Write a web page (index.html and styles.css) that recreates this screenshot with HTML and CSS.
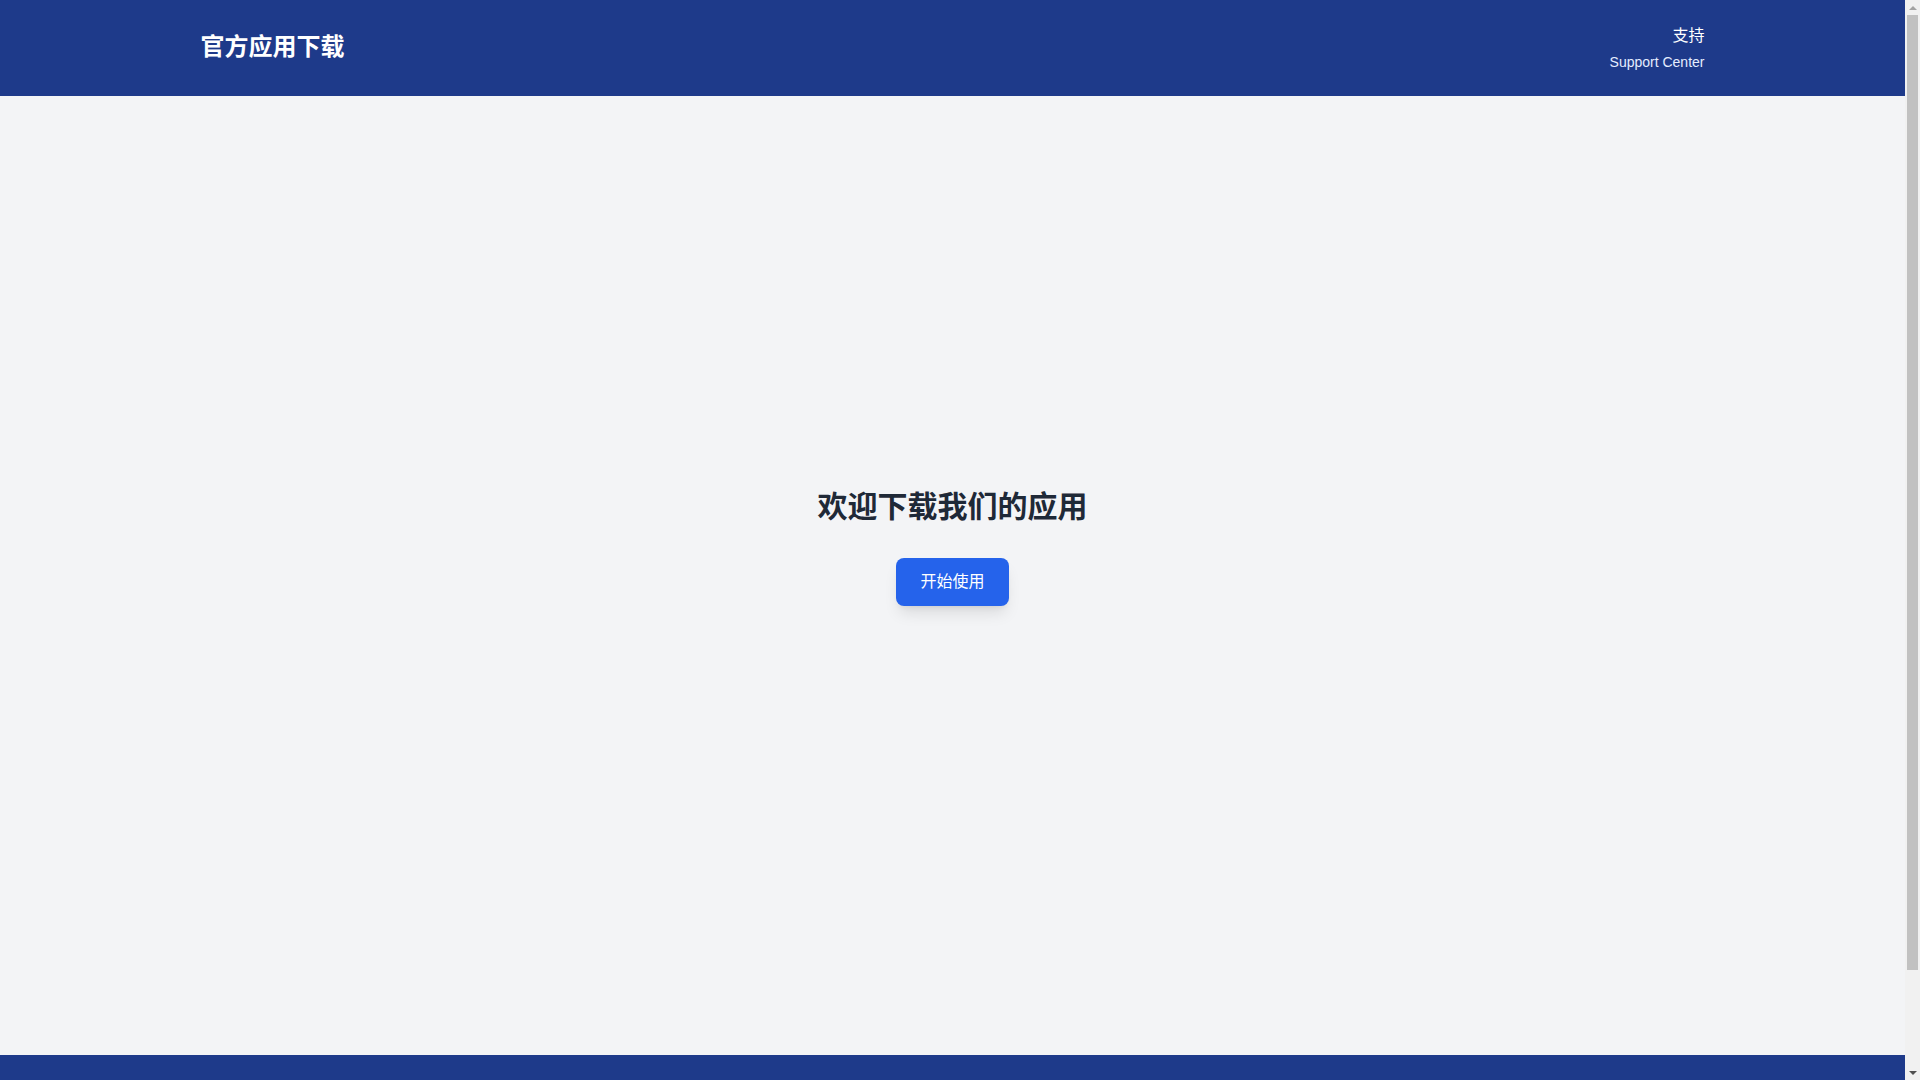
FILE: index.html
```html
<!DOCTYPE html>
<html lang="zh-CN">
<head>
<meta charset="utf-8">
<title>官方应用下载</title>
<link rel="stylesheet" href="styles.css">
</head>
<body>
<div class="page">
  <header class="site-header">
    <div class="container header-inner">
      <div class="brand">官方应用下载</div>
      <div class="support">
        <div class="support-title">支持</div>
        <div class="support-sub">Support Center</div>
      </div>
    </div>
  </header>
  <main class="hero">
    <h1 class="hero-title">欢迎下载我们的应用</h1>
    <button class="cta">开始使用</button>
  </main>
  <footer class="site-footer"></footer>
</div>
<div class="scrollbar" aria-hidden="true">
  <div class="sb-arrow sb-up"></div>
  <div class="sb-track"><div class="sb-thumb"></div></div>
  <div class="sb-arrow sb-down"></div>
</div>
</body>
</html>
```
FILE: styles.css
```css
* { box-sizing: border-box; }
html, body { margin: 0; padding: 0; }
body {
  font-family: "Liberation Sans", "Noto Sans CJK SC", sans-serif;
  background: #f3f4f6;
  color: #1f2937;
}
.page {
  margin-right: 15px;
}
.container {
  max-width: 1536px;
  margin: 0 auto;
  padding: 0 16px;
}
.site-header {
  background: #1e3a8a;
  color: #ffffff;
  height: 96px;
}
.header-inner {
  height: 96px;
  display: flex;
  align-items: center;
  justify-content: space-between;
}
.brand {
  font-size: 24px;
  line-height: 32px;
  font-weight: 700;
  margin-top: -2px;
}
.support {
  text-align: right;
  display: flex;
  flex-direction: column;
  gap: 4px;
  margin-top: -1px;
}
.support-title {
  font-size: 16px;
  line-height: 24px;
}
.support-sub {
  font-size: 14px;
  line-height: 20px;
  color: #e5edff;
}
.hero {
  height: 959px;
  display: flex;
  flex-direction: column;
  align-items: center;
  padding-top: 393px;
}
.hero-title {
  margin: 0 0 33px;
  font-size: 30px;
  line-height: 36px;
  font-weight: 700;
  color: #1f2937;
}
.cta {
  font-family: inherit;
  background: #2563eb;
  color: #ffffff;
  border: none;
  border-radius: 8px;
  font-size: 16px;
  line-height: 24px;
  padding: 12px 24px;
  box-shadow: 0 10px 15px -3px rgba(0,0,0,0.1), 0 4px 6px -4px rgba(0,0,0,0.1);
  cursor: pointer;
}
.site-footer {
  background: #1e3a8a;
  height: 132px;
}
.scrollbar {
  position: fixed;
  top: 0;
  right: 0;
  width: 15px;
  height: 100vh;
  background: #f1f1f1;
  display: flex;
  flex-direction: column;
}
.sb-arrow {
  height: 15px;
  flex: none;
  display: flex;
  align-items: center;
  justify-content: center;
}
.sb-up::before {
  content: "";
  border-left: 4px solid transparent;
  border-right: 4px solid transparent;
  border-bottom: 4px solid #a3a3a3;
}
.sb-down::before {
  content: "";
  border-left: 4px solid transparent;
  border-right: 4px solid transparent;
  border-top: 4px solid #505050;
}
.sb-track {
  flex: 1;
  padding: 0 2px;
}
.sb-thumb {
  height: 955px;
  background: #c1c1c1;
}
```
